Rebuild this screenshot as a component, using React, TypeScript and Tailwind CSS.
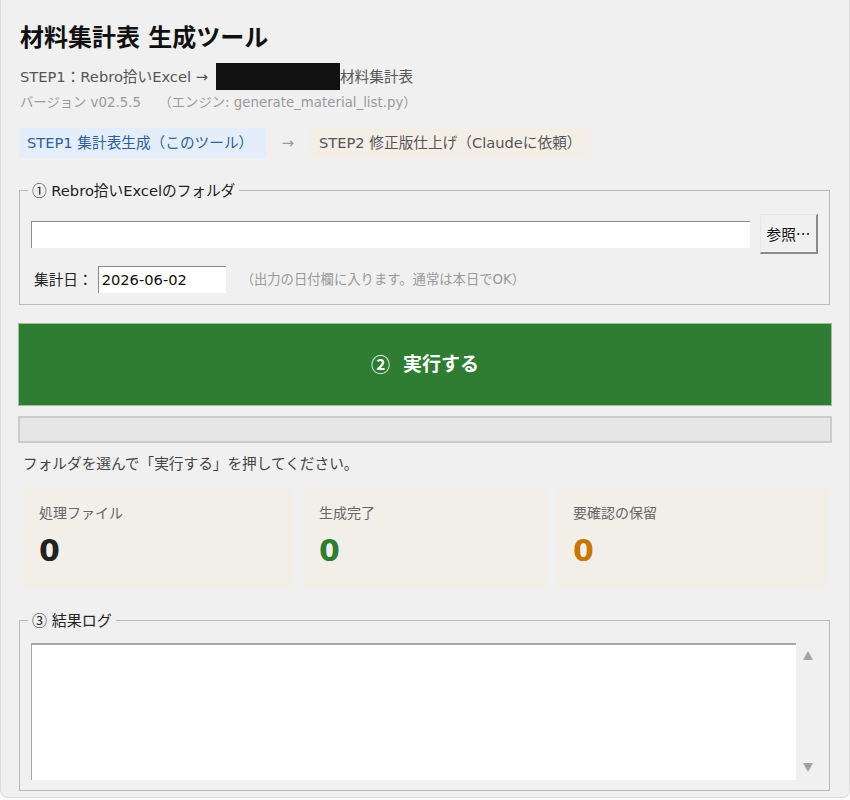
import React from 'react';

const font = { fontFamily: '"DejaVu Sans", "Noto Sans CJK JP", sans-serif' };
const cjk = { fontFamily: '"Noto Sans CJK JP", sans-serif' };

function Card({ label, value, color, width }: { label: string; value: string; color: string; width: string }) {
  return (
    <div className={`${width} h-[99px] bg-[#f2efe9] pl-[16px] pt-[14px]`}>
      <div className="text-[14px] leading-[20px] text-[#666]">{label}</div>
      <div className={`mt-[10px] text-[30px] leading-[36px] font-bold ${color}`}>{value}</div>
    </div>
  );
}

export default function App() {
  return (
    <div className="w-[850px] h-[800px] bg-[#fafafa]" style={font}>
      <div className="w-[850px] h-[798px] bg-[#f0f0f0] border-x border-b border-[#dcdcdc] rounded-b-[8px] flex flex-col overflow-hidden">
        <div className="pl-[19px] pt-[20px]">
          <h1 className="text-[24px] leading-[36px] font-bold text-[#111]">材料集計表 生成ツール</h1>
          <div className="mt-[7px] h-[27px] flex items-center text-[14.67px] text-[#555]">
            <span>STEP1：Rebro拾いExcel →</span>
            <span className="ml-[8px] inline-block w-[124px] h-[27px] bg-[#111]" />
            <span>材料集計表</span>
          </div>
          <div className="mt-[3px] text-[13.33px] leading-[20px] text-[#9a9a9a] whitespace-pre">
            バージョン v02.5.5　 （エンジン: generate_material_list.py）
          </div>
        </div>

        <div className="mt-[15px] ml-[18px] flex items-center h-[30px] text-[14.67px]">
          <div className="h-[30px] w-[247px] bg-[#e3eefa] text-[#2f5f96] flex items-center pl-[8px]">
            STEP1 集計表生成（このツール）
          </div>
          <div className="w-[44px] text-center text-[#9a9a9a]">→</div>
          <div className="h-[30px] w-[281px] bg-[#f3efe7] text-[#555] flex items-center pl-[9px]">
            STEP2 修正版仕上げ（Claudeに依頼）
          </div>
        </div>

        <fieldset className="mt-[22px] ml-[18px] mr-[19px] border border-[#b9b9b9] pl-[8px] pr-[11px] pt-[13px] pb-[11px]">
          <legend className="px-[4px] text-[14.67px] leading-[20px] text-[#222]">
            <span style={cjk}>①</span> Rebro拾いExcelのフォルダ
          </legend>
          <div className="pl-[3px] flex items-center gap-[10px] h-[40px]">
            <div className="flex-1 h-[27px] bg-white border-t border-l border-[#8a8a8a]" />
            <button className="w-[58px] h-[40px] bg-[#f0f0f0] border border-t-[#e6e6e6] border-l-[#e6e6e6] border-b-2 border-r-2 border-b-[#8a8a8a] border-r-[#8a8a8a] text-[14.67px] text-[#111]" style={cjk}>
              参照…
            </button>
          </div>
          <div className="pl-[6px] mt-[12px] flex items-center h-[27px] text-[14.67px]">
            <span className="text-[#222]">集計日：</span>
            <div className="ml-[5px] w-[128px] h-[27px] bg-white border-t border-l border-[#8a8a8a] flex items-center pl-[3px] text-[#111]">
              2026-06-02
            </div>
            <span className="ml-[15px] text-[13.33px] text-[#9a9a9a]">（出力の日付欄に入ります。通常は本日でOK）</span>
          </div>
        </fieldset>

        <button className="mt-[18px] mx-[17px] h-[83px] bg-[#2e7d32] border border-[#9fbf9f] text-white text-[19px] font-bold flex items-center justify-center">
          <span style={cjk}>②</span>&nbsp;&nbsp;実行する
        </button>

        <div className="mt-[10px] mx-[17px] h-[27px] bg-[#e6e6e6] border-2 border-[#cccccc]" />

        <div className="mt-[11px] pl-[22px] text-[14.67px] leading-[20px] text-[#444]">
          フォルダを選んで「実行する」を押してください。
        </div>

        <div className="mt-[15px] ml-[22px] flex gap-[10px]">
          <Card label="処理ファイル" value="0" color="text-[#222]" width="w-[270px]" />
          <Card label="生成完了" value="0" color="text-[#2e7d32]" width="w-[244px]" />
          <Card label="要確認の保留" value="0" color="text-[#c77700]" width="w-[272px]" />
        </div>

        <fieldset className="mt-[22px] ml-[18px] mr-[19px] border border-[#b9b9b9] pl-[8px] pr-[11px] pt-[12px] pb-[10px]">
          <legend className="px-[4px] text-[15px] leading-[20px] text-[#222]">
            <span style={cjk}>③</span> 結果ログ
          </legend>
          <div className="pl-[3px] flex">
            <div className="flex-1 h-[137px] bg-white border-t-2 border-l border-[#a8a8a8]" />
            <div className="w-[22px] h-[137px] flex flex-col items-center justify-between py-[8px] pl-[2px]">
              <svg width="10" height="9" viewBox="0 0 10 9"><polygon points="5,0 10,9 0,9" fill="#a3a3a3" /></svg>
              <svg width="10" height="9" viewBox="0 0 10 9"><polygon points="0,0 10,0 5,9" fill="#a3a3a3" /></svg>
            </div>
          </div>
        </fieldset>
      </div>
    </div>
  );
}
